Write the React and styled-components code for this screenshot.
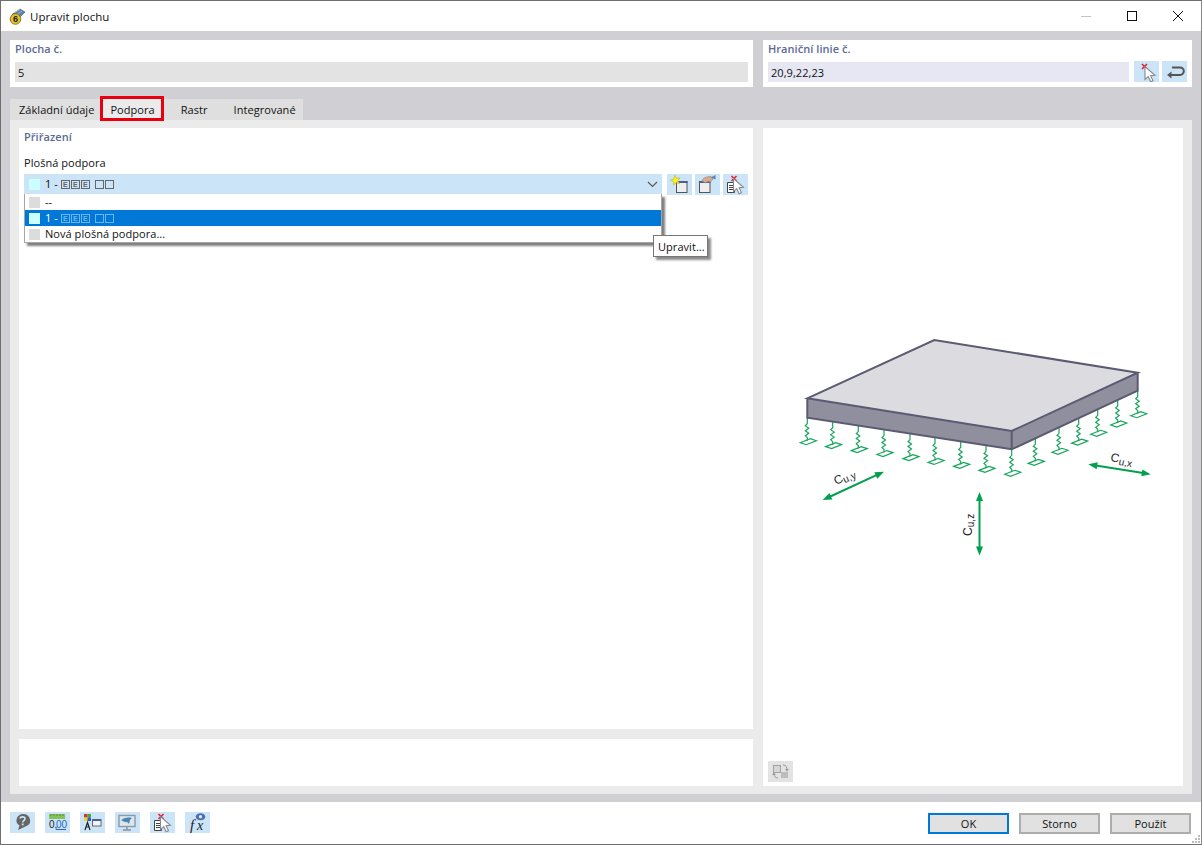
import React from 'react';
import styled, { createGlobalStyle } from 'styled-components';

const GlobalStyle = createGlobalStyle`
  html, body {
    margin: 0;
    padding: 0;
    background: #fff;
  }
  * {
    box-sizing: border-box;
  }
`;

const Window = styled.div`
  width: 1202px;
  height: 845px;
  display: flex;
  flex-direction: column;
  background: #fff;
  border: 1px solid #6f6f6f;
  border-right-color: #8a8a8a;
  font-family: "Open Sans", "Noto Sans", "Liberation Sans", sans-serif;
  font-size: 11px;
  letter-spacing: 0.05px;
  color: #111;
`;

const TitleBar = styled.div`
  height: 30px;
  display: flex;
  align-items: center;
  padding-left: 8px;
`;

const Title = styled.div`
  flex: 1;
  margin-left: 5px;
  font-size: 11.5px;
`;

const WinButton = styled.div`
  width: 46px;
  height: 30px;
  display: flex;
  align-items: center;
  justify-content: center;
`;

const Body = styled.div`
  flex: 1;
  background: #d0d0d4;
  padding: 9px 9px 8px;
  display: flex;
  flex-direction: column;
`;

const TopRow = styled.div`
  display: flex;
  gap: 10px;
  height: 47px;
`;

const TopPanel = styled.div`
  width: ${(p) => p.$width}px;
  background: #fff;
  padding: 0 5px 5px;
  display: flex;
  flex-direction: column;
`;

const GroupTitle = styled.div`
  height: 22px;
  line-height: 17px;
  color: #5d6a94;
  font-weight: 600;
`;

const FieldRow = styled.div`
  display: flex;
  align-items: center;
`;

const Field = styled.div`
  flex: 1;
  height: 20px;
  line-height: 21px;
  padding-left: 3px;
  background: ${(p) => p.$bg};
`;

const TabStrip = styled.div`
  display: flex;
  align-self: flex-start;
  height: 21px;
  margin-top: 12px;
  background: #dfdfdf;
`;

const Tab = styled.div`
  position: relative;
  line-height: 22px;
  padding: 0 ${(p) => p.$right ?? 8}px 0 ${(p) => p.$left ?? 9}px;
  margin-left: ${(p) => p.$ml || 0}px;
  background: ${(p) => (p.$marked ? '#ebebeb' : 'transparent')};

  ${(p) => p.$marked && `
    &::after {
      content: "";
      position: absolute;
      inset: -3px -3px -1px -1px;
      border: 3px solid #e8000f;
    }
  `}
`;

const TabPanel = styled.div`
  flex: 1;
  background: #ebebeb;
  padding: 8px 9px;
  display: grid;
  grid-template-columns: 734px 420px;
  column-gap: 10px;
`;

const LeftColumn = styled.div`
  display: flex;
  flex-direction: column;
  gap: 10px;
`;

const MainCard = styled.div`
  flex: 1;
  background: #fff;
  padding: 0 5px;
  position: relative;
`;

const NoteCard = styled.div`
  height: 47px;
  background: #fff;
`;

const SectionTitle = styled(GroupTitle)`
  height: 26px;
  line-height: 17px;
`;

const FieldLabel = styled.div`
  height: 20px;
  line-height: 18px;
`;

const ComboRow = styled.div`
  display: flex;
  height: 21px;
`;

const Combo = styled.div`
  width: 638px;
  height: 20px;
  margin-right: 5px;
  background: #cce4f7;
  display: flex;
  align-items: center;
  padding: 0 5px;
  position: relative;
`;

const Chevron = styled.svg`
  position: absolute;
  right: 4px;
  top: 7px;
`;

const Swatch = styled.span`
  width: 11px;
  height: 11px;
  margin-right: 5px;
  flex: none;
  background: ${(p) => p.$color};
`;

const ItemText = styled.span`
  display: inline-flex;
  align-items: center;
  margin-top: -2px;
`;

const Tofu = styled.span`
  display: inline-flex;
  align-items: center;
  justify-content: center;
  width: 9px;
  height: 9px;
  margin-top: 2px;
  margin-right: ${(p) => p.$mr || 1}px;
  border: 1px solid currentColor;
  font-family: "Liberation Sans", sans-serif;
  font-size: 7px;
  font-weight: 700;
  line-height: 1;
  color: ${(p) => (p.$light ? '#6db4ec' : '#666')};
`;

const Dropdown = styled.div`
  position: absolute;
  left: 5px;
  top: 66px;
  width: 638px;
  background: #fff;
  border: 1px solid #a6a6a6;
  border-top: 0;
  box-shadow: 3px 3px 2px rgba(0, 0, 0, 0.5);
`;

const Option = styled.div`
  height: 16px;
  display: flex;
  align-items: center;
  padding-left: 4px;
  background: ${(p) => (p.$selected ? '#0078d7' : '#fff')};
  color: ${(p) => (p.$selected ? '#fff' : '#111')};
`;

const Tooltip = styled.div`
  position: absolute;
  left: 634px;
  top: 107px;
  width: 55px;
  height: 22px;
  line-height: 21px;
  padding-left: 4px;
  background: #fff;
  border: 1px solid #767676;
  box-shadow: 3px 3px 2px rgba(0, 0, 0, 0.45);
`;

const PreviewCard = styled.div`
  background: #fff;
  display: flex;
  flex-direction: column;
  padding: 0 0 4px 5px;
`;

const Drawing = styled.div`
  flex: 1;
  padding: 202px 0 0 22px;

  svg {
    display: block;
  }
`;

const IconButton = styled.div`
  width: 25px;
  height: 21px;
  flex: none;
  margin-left: ${(p) => p.$ml || 0}px;
  background: ${(p) => (p.$disabled ? '#e3e3e3' : '#cce4f7')};

  svg {
    display: block;
  }
`;

const Footer = styled.div`
  height: 42px;
  padding: 10px 10px 0 9px;
  display: flex;
  position: relative;
`;

const FooterIcons = styled.div`
  flex: 1;
  display: flex;
  gap: 10px;
`;

const DialogButton = styled.div`
  width: 81px;
  height: 21px;
  margin: 1px 0 0 10px;
  line-height: 17px;
  text-align: center;
  background: #e1e1e1;
  border: 2px solid ${(p) => (p.$primary ? '#0078d7' : '#adadad')};
`;

const Grip = styled.svg`
  position: absolute;
  right: 0;
  bottom: 0;
`;

const Cursor = ({ x = 0, y = 0 }) => (
  <path
    transform={`translate(${x} ${y}) scale(1.08)`}
    d="M0 0v12l3-2.6 2.2 4.8 2.2-1-2.2-4.6 4-.4z"
    fill="#fff"
    stroke="#85898e"
    strokeWidth="1"
  />
);

const RedCross = ({ x, y }) => (
  <path d={`M${x} ${y}l5 5m0-5l-5 5`} stroke="#e8202c" strokeWidth="1.6" />
);

const Doc = () => (
  <>
    <path d="M4.5 8.5h6l1 1v9h-7z" fill="#fff" stroke="#444" />
    <path d="M6 11.5h4M6 13.5h4M6 15.5h4" stroke="#444" />
  </>
);

const Svg = ({ children }) => (
  <svg width="25" height="21" viewBox="0 0 25 21">{children}</svg>
);

const PickIcon = () => (
  <Svg>
    <RedCross x={8} y={3} />
    <Cursor x={11} y={5.5} />
  </Svg>
);

const ReturnIcon = () => (
  <Svg>
    <path d="M8 14h10a3.800 3.800 0 0 0 0-7.600H10" fill="none" stroke="#555" strokeWidth="2" />
    <path d="M5 14l4.500-3.500v7z" fill="#555" />
  </Svg>
);

const NewIcon = () => (
  <Svg>
    <rect x="9.500" y="7.500" width="10.500" height="11" fill="#eee" stroke="#555" />
    <rect x="10" y="7" width="10.500" height="2" fill="#4a5f95" />
    <path d="M8 1l1.500 3.400 3.500-.6-2.300 2.800 1.800 3.100-3.400-1.200-2.500 2.700.1-3.600-3.300-1.500 3.400-1z" fill="#ffef1e" stroke="#b4a820" strokeWidth=".5" />
  </Svg>
);

const EditIcon = () => (
  <Svg>
    <rect x="4.500" y="7.500" width="10.500" height="11" fill="#eee" stroke="#555" />
    <rect x="5" y="7" width="10.500" height="2" fill="#4a5f95" />
    <path d="M7 7c.5-3 4-4.500 9-4.500l2 2.500-2.500 3-3-.5-2 1.500z" fill="#d3a98f" stroke="#96755f" strokeWidth=".5" />
    <path d="M15.500 3.500L20.500 1v4.500z" fill="#5b83c9" />
  </Svg>
);

const DeleteIcon = () => (
  <Svg>
    <Doc />
    <RedCross x={8.500} y={2} />
    <Cursor x={10.500} y={4.500} />
  </Svg>
);

const HelpIcon = () => (
  <Svg>
    <path d="M12.500 2a7.500 6.500 0 0 1 3 12.500L8 18l1.500-4.400A7.500 6.500 0 0 1 12.500 2z" fill="#666" />
    <path d="M10 6.500c.5-2.200 5-2.200 5 .3 0 2-2.300 1.700-2.300 3.700" fill="none" stroke="#cce4f7" strokeWidth="1.600" />
    <rect x="11.800" y="11.500" width="1.800" height="1.800" fill="#cce4f7" />
  </Svg>
);

const DecimalsIcon = () => (
  <Svg>
    <rect x="4" y="2" width="16" height="5" fill="#85c15a" />
    <path d="M6 2v2M9 2v2M12 2v2M15 2v2M18 2v2" stroke="#4f8f2f" />
    <text x="4" y="16" fontFamily="Liberation Sans" fontSize="10" fill="#222">0,</text>
    <text x="11" y="16" fontFamily="Liberation Sans" fontSize="10" fill="#2a66c8">00</text>
    <path d="M11 17.500h10" stroke="#2a66c8" />
  </Svg>
);

const ColorsIcon = () => (
  <Svg>
    <rect x="4" y="2" width="3.500" height="3.500" fill="#e22b2b" />
    <rect x="7.500" y="2" width="3.500" height="3.500" fill="#3fae3f" />
    <rect x="4" y="5.500" width="3.500" height="3.500" fill="#f3d61d" />
    <rect x="7.500" y="5.500" width="3.500" height="3.500" fill="#3557d0" />
    <path d="M5 18l2.500-7.500L10 18M6 15h3" fill="none" stroke="#222" strokeWidth="1.200" />
    <rect x="12.500" y="7.500" width="8.500" height="6.500" fill="#f3f3f3" stroke="#666" />
    <rect x="13" y="7" width="8" height="2" fill="#4a5f95" />
  </Svg>
);

const MonitorIcon = () => (
  <Svg>
    <rect x="4" y="3.500" width="16" height="11" fill="#dbe6ef" stroke="#8a9aa8" strokeWidth="1.400" />
    <path d="M6 8.500c3-3 7-3.500 11-2.500l-2 2-1 4c-1-2-2.500-2.500-3.500-1.700-1.500-1-2.800-1.500-4.500-1.800z" fill="#4a86ad" />
    <path d="M12 15v2.500M8 18h8" stroke="#8a9099" strokeWidth="1.400" />
  </Svg>
);

const FormulaIcon = () => (
  <Svg>
    <text x="5" y="18" fontFamily="Liberation Serif" fontStyle="italic" fontSize="15" fill="#222">f</text>
    <text x="12" y="18" fontFamily="Liberation Serif" fontStyle="italic" fontSize="14" fill="#222">x</text>
    <ellipse cx="15.500" cy="4.800" rx="4.800" ry="3.500" fill="#4a6fb0" />
    <circle cx="15.500" cy="4.800" r="1.700" fill="#dfe8f5" />
  </Svg>
);

const SwapIcon = () => (
  <Svg>
    <rect x="5.500" y="4.500" width="7" height="7" fill="#d6d6d6" stroke="#a2a2a2" />
    <rect x="13" y="11" width="7" height="6" fill="#bdbdbd" />
    <path d="M15 4c3 0 4 2 4 5M10 17c-3 0-4-2-4-4" fill="none" stroke="#999" />
    <path d="M17 8h4l-2 2.500zM4 14h4l-2-2.500z" fill="#999" />
  </Svg>
);

const AppIcon = () => (
  <svg width="16" height="18" viewBox="0 0 16 18">
    <path d="M3 7.500L11 2l5 3-6 6z" fill="#5f82a8" stroke="#3c5672" strokeWidth=".6" />
    <path d="M5 6l6-3.500M7 8l6-4" stroke="#b9cde0" strokeWidth=".7" />
    <circle cx="6.500" cy="12" r="5.300" fill="#e6c12a" stroke="#77651a" strokeWidth=".8" />
    <text x="4" y="15.300" fontFamily="Liberation Sans" fontWeight="700" fontSize="9" fill="#222">6</text>
  </svg>
);

const lerp = (a, b, x) => a[1] + ((x - a[0]) / (b[0] - a[0])) * (b[1] - a[1]);
const LEFT = [807.3, 417.7];
const FRONT = [1011.7, 449.3];
const RIGHT = [1137.7, 390.7];
const leftSprings = [807.3, 832.7, 858.3, 884, 910, 935, 960.7, 986];
const rightSprings = [1011.7, 1035.3, 1059, 1078.7, 1097.7, 1117.7, 1137.7];
const springs = [
  ...leftSprings.map((x) => [x, lerp(LEFT, FRONT, x)]),
  ...rightSprings.map((x) => [x, lerp(FRONT, RIGHT, x)]),
];

const Spring = ({ x, y }) => (
  <g fill="none" stroke="#17a55c" strokeWidth="1.200">
    <path d={`M${x} ${y}v6l-2 2 3.500 2.500-3.500 2.500 3.500 2.500-3.500 2.500 2 2v3`} />
    <path d={`M${x - 7} ${y + 25}l10-4 6 2-10 4z`} />
  </g>
);

const DoubleArrow = ({ x1, y1, x2, y2 }) => {
  const angle = (Math.atan2(y2 - y1, x2 - x1) * 180) / Math.PI;
  const len = Math.hypot(x2 - x1, y2 - y1);
  return (
    <g transform={`translate(${x1} ${y1}) rotate(${angle})`} fill="#00a04f">
      <rect x="6" y="-1" width={len - 12} height="2" />
      <path d={`M0 0l9-3.500v7zM${len} 0l-9-3.500v7z`} />
    </g>
  );
};

const AxisLabel = ({ x, y, angle, sub }) => (
  <text
    transform={`translate(${x} ${y}) rotate(${angle})`}
    fontFamily="Liberation Sans"
    fontSize="12"
    fill="#222"
  >
    C<tspan fontSize="10" dy="2">{sub}</tspan>
  </text>
);

const Plate = () => (
  <svg width="370" height="230" viewBox="790 330 370 230">
    {springs.map(([x, y]) => (
      <Spring key={x} x={x} y={y} />
    ))}
    <path d="M807.300 398.300L934.300 340 1137.700 372.700 1011.700 431z" fill="#dcdce0" />
    <path d="M807.300 398.300L1011.700 431 1137.700 372.700V390.700L1011.700 449.300 807.300 417.700z" fill="#8f8f9d" />
    <path
      d="M807.300 398.300L934.300 340 1137.700 372.700 1011.700 431zM807.300 398.300V417.700L1011.700 449.300 1137.700 390.700V372.700M1011.700 431V449.300"
      fill="none"
      stroke="#5a5a72"
      strokeWidth="2"
    />
    <DoubleArrow x1={1088.300} y1={464.300} x2={1150.700} y2={474.300} />
    <DoubleArrow x1={822.700} y1={500} x2={884} y2={471.700} />
    <DoubleArrow x1={979.500} y1={492} x2={979.500} y2={555.500} />
    <AxisLabel x={1110} y={461} angle={11} sub="u,x" />
    <AxisLabel x={836} y={485} angle={-24} sub="u,y" />
    <AxisLabel x={972} y={536} angle={-90} sub="u,z" />
  </svg>
);

const SupportName = ({ light }) => (
  <ItemText>
    1 -&nbsp;
    <Tofu $light={light}>E</Tofu>
    <Tofu $light={light}>E</Tofu>
    <Tofu $light={light} $mr={5}>E</Tofu>
    <Tofu $light={light} />
    <Tofu $light={light} />
  </ItemText>
);

export default function App() {
  return (
    <Window>
      <GlobalStyle />
      <TitleBar>
        <AppIcon />
        <Title>Upravit plochu</Title>
        <WinButton>
          <svg width="10" height="10"><path d="M0 5.500h10" stroke="#c4c4c4" /></svg>
        </WinButton>
        <WinButton>
          <svg width="10" height="10"><rect x=".5" y=".5" width="9" height="9" fill="none" stroke="#111" /></svg>
        </WinButton>
        <WinButton>
          <svg width="10" height="10"><path d="M0 0l10 10M10 0L0 10" stroke="#111" /></svg>
        </WinButton>
      </TitleBar>

      <Body>
        <TopRow>
          <TopPanel $width={743}>
            <GroupTitle>Plocha č.</GroupTitle>
            <FieldRow>
              <Field $bg="#e3e3e3">5</Field>
            </FieldRow>
          </TopPanel>
          <TopPanel $width={429}>
            <GroupTitle>Hraniční linie č.</GroupTitle>
            <FieldRow>
              <Field $bg="#e6e7f2">20,9,22,23</Field>
              <IconButton $ml={5}><PickIcon /></IconButton>
              <IconButton $ml={3}><ReturnIcon /></IconButton>
            </FieldRow>
          </TopPanel>
        </TopRow>

        <TabStrip>
          <Tab $right={7}>Základní údaje</Tab>
          <Tab $marked $right={6}>Podpora</Tab>
          <Tab $ml={11} $right={9}>Rastr</Tab>
          <Tab $ml={8} $right={7}>Integrované</Tab>
        </TabStrip>

        <TabPanel>
          <LeftColumn>
            <MainCard>
              <SectionTitle>Přiřazení</SectionTitle>
              <FieldLabel>Plošná podpora</FieldLabel>
              <ComboRow>
                <Combo>
                  <Swatch $color="#ccffff" />
                  <SupportName />
                  <Chevron width="11" height="7" viewBox="0 0 11 7">
                    <path d="M1 1l4.500 4.500L10 1" fill="none" stroke="#555" strokeWidth="1.100" />
                  </Chevron>
                </Combo>
                <IconButton><NewIcon /></IconButton>
                <IconButton $ml={3}><EditIcon /></IconButton>
                <IconButton $ml={3}><DeleteIcon /></IconButton>
              </ComboRow>
              <Dropdown>
                <Option><Swatch $color="#dcdcdc" /><ItemText>--</ItemText></Option>
                <Option $selected><Swatch $color="#ccffff" /><SupportName light /></Option>
                <Option><Swatch $color="#dcdcdc" /><ItemText>Nová plošná podpora...</ItemText></Option>
              </Dropdown>
              <Tooltip>Upravit...</Tooltip>
            </MainCard>
            <NoteCard />
          </LeftColumn>

          <PreviewCard>
            <Drawing>
              <Plate />
            </Drawing>
            <IconButton $disabled><SwapIcon /></IconButton>
          </PreviewCard>
        </TabPanel>
      </Body>

      <Footer>
        <FooterIcons>
          <IconButton><HelpIcon /></IconButton>
          <IconButton><DecimalsIcon /></IconButton>
          <IconButton><ColorsIcon /></IconButton>
          <IconButton><MonitorIcon /></IconButton>
          <IconButton><DeleteIcon /></IconButton>
          <IconButton><FormulaIcon /></IconButton>
        </FooterIcons>
        <DialogButton $primary>OK</DialogButton>
        <DialogButton>Storno</DialogButton>
        <DialogButton>Použít</DialogButton>
        <Grip width="10" height="10" viewBox="0 0 10 10">
          <path d="M7 1h2v2H7zM4 4h2v2H4zM7 4h2v2H7zM1 7h2v2H1zM4 7h2v2H4zM7 7h2v2H7z" fill="#bdbdbd" />
        </Grip>
      </Footer>
    </Window>
  );
}
